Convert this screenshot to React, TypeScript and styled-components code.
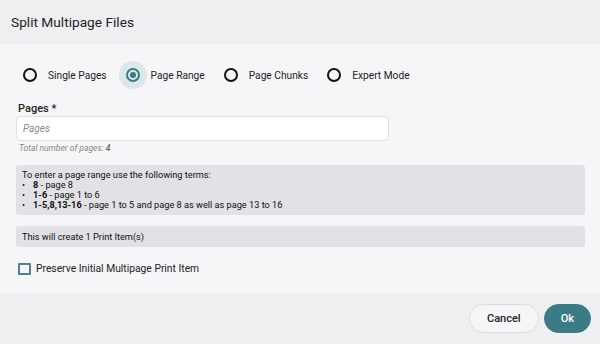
import React, { ReactElement, useState } from 'react'
import styled, { createGlobalStyle } from 'styled-components'

const GlobalStyle = createGlobalStyle`
  html, body {
    margin: 0;
    padding: 0;
    background: #f6f6f8;
  }
  body {
    font-family: Roboto, "Liberation Sans", sans-serif;
    color: #222;
  }
`

const modes = ['Single Pages', 'Page Range', 'Page Chunks', 'Expert Mode']

export default function App(): ReactElement {
  const [mode, setMode] = useState('Page Range')
  const [preserve, setPreserve] = useState(false)

  return (
    <>
      <GlobalStyle />
      <Dialog>
        <Header>Split Multipage Files</Header>
        <Body>
          <RadioRow>
            {modes.map((m) => (
              <RadioItem key={m} onClick={() => setMode(m)}>
                <RadioHalo active={m === mode}>
                  <RadioRing active={m === mode} />
                </RadioHalo>
                <RadioLabel>{m}</RadioLabel>
              </RadioItem>
            ))}
          </RadioRow>

          <FieldLabel>Pages *</FieldLabel>
          <TextInput placeholder="Pages" />
          <Helper>
            Total number of pages: <b>4</b>
          </Helper>

          <InfoBox>
            To enter a page range use the following terms:
            <Terms>
              <li><b>8</b> - page 8</li>
              <li><b>1-6</b> - page 1 to 6</li>
              <li><b>1-5,8,13-16</b> - page 1 to 5 and page 8 as well as page 13 to 16</li>
            </Terms>
          </InfoBox>

          <SummaryBox>This will create 1 Print Item(s)</SummaryBox>

          <CheckRow onClick={() => setPreserve(!preserve)}>
            <CheckBox checked={preserve} />
            Preserve Initial Multipage Print Item
          </CheckRow>
        </Body>
        <Footer>
          <Button>Cancel</Button>
          <Button primary>Ok</Button>
        </Footer>
      </Dialog>
    </>
  )
}

const Dialog = styled.div`
display: flex;
flex-direction: column;
width: 600px;
height: 344px;
`

const Header = styled.div`
height: 44px;
display: flex;
align-items: center;
padding-left: 11px;
background: #efeff1;
font-size: 13.7px;
color: #222;
`

const Body = styled.div`
flex: 1;
display: flex;
flex-direction: column;
padding: 0 15px 0 16px;
background: #f6f6f8;
`

const RadioRow = styled.div`
display: flex;
align-items: center;
gap: 12px;
margin-top: 17px;
height: 28px;
`

const RadioItem = styled.div`
display: flex;
align-items: center;
gap: 4px;
cursor: pointer;
`

const RadioHalo = styled.div<{ active: boolean }>`
width: 28px;
height: 28px;
border-radius: 50%;
display: flex;
align-items: center;
justify-content: center;
background: ${(p) => (p.active ? '#dbe7e9' : 'transparent')};
`

const RadioRing = styled.div<{ active: boolean }>`
box-sizing: border-box;
width: 14px;
height: 14px;
border-radius: 50%;
border: 2px solid ${(p) => (p.active ? '#3a7b86' : '#111')};
display: flex;
align-items: center;
justify-content: center;
&::after {
  content: '';
  display: ${(p) => (p.active ? 'block' : 'none')};
  width: 6px;
  height: 6px;
  border-radius: 50%;
  background: #3a7b86;
}
`

const RadioLabel = styled.span`
font-size: 10.2px;
color: #222;
`

const FieldLabel = styled.div`
margin-top: 13px;
margin-left: 2px;
font-size: 11px;
font-weight: 500;
color: #222;
`

const TextInput = styled.input`
box-sizing: border-box;
width: 373px;
height: 25px;
margin-top: 1px;
padding: 0 6px;
border: 1px solid #e0e0e2;
border-radius: 4px;
background: #fff;
font-family: Roboto, "Liberation Sans", sans-serif;
font-size: 10px;
outline: none;
&::placeholder {
  color: #8a8a8a;
  font-style: italic;
}
`

const Helper = styled.div`
margin-top: 2px;
margin-left: 3px;
font-size: 8.5px;
font-style: italic;
color: #888;
b {
  font-weight: 500;
  color: #666;
}
`

const InfoBox = styled.div`
box-sizing: border-box;
margin-top: 12px;
padding: 5px 6px;
height: 50px;
background: #e2e1e5;
border-radius: 3px;
font-size: 9.2px;
line-height: 10px;
color: #111;
`

const Terms = styled.ul`
margin: 0;
padding: 0 0 0 11px;
li {
  list-style: none;
  position: relative;
}
li::before {
  content: '•';
  position: absolute;
  left: -11px;
  top: 0;
  font-size: 9px;
}
b {
  font-weight: 700;
}
`

const SummaryBox = styled.div`
box-sizing: border-box;
margin-top: 11px;
height: 21px;
padding: 0 6px;
display: flex;
align-items: center;
background: #e2e1e5;
border-radius: 3px;
font-size: 9.2px;
color: #111;
`

const CheckRow = styled.div`
display: flex;
align-items: center;
gap: 5px;
margin-top: 15px;
margin-left: 2px;
font-size: 10.3px;
color: #222;
cursor: pointer;
`

const CheckBox = styled.div<{ checked: boolean }>`
box-sizing: border-box;
width: 13px;
height: 12px;
border: 2px solid #4a8591;
border-radius: 1px;
background: ${(p) => (p.checked ? '#4a8591' : 'transparent')};
`

const Footer = styled.div`
height: 51px;
display: flex;
align-items: center;
justify-content: flex-end;
gap: 5px;
padding-right: 9px;
background: #efeff1;
`

const Button = styled.button<{ primary?: boolean }>`
box-sizing: border-box;
height: 29px;
padding: 0 ${(p) => (p.primary ? '16px' : '17px')};
border-radius: 15px;
border: 1px solid ${(p) => (p.primary ? '#3a7b86' : '#dddde0')};
background: ${(p) => (p.primary ? '#3a7b86' : '#f6f6f8')};
color: ${(p) => (p.primary ? '#fff' : '#222')};
font-family: Roboto, "Liberation Sans", sans-serif;
font-size: 11px;
font-weight: 500;
cursor: pointer;
min-width: ${(p) => (p.primary ? '47px' : '67px')};
`
